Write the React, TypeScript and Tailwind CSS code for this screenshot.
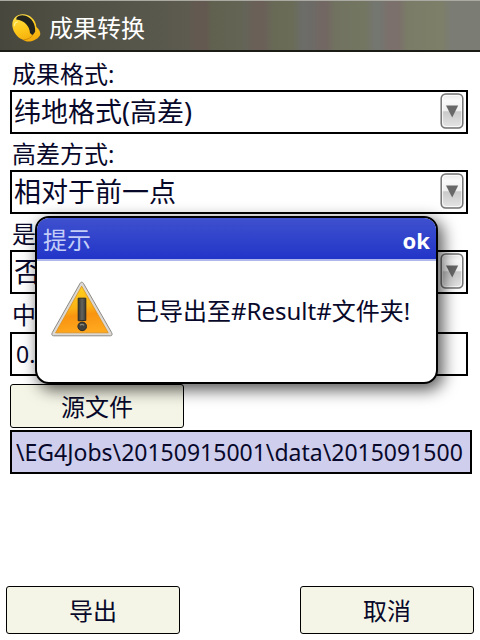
import React, { useState } from 'react';

type SelectFieldProps = {
  id: string;
  label: string;
  options: string[];
};

const SelectField: React.FC<SelectFieldProps> = ({ id, label, options }) => (
  <div className="flex flex-col">
    <label htmlFor={id} className="flex h-9 items-center px-0.5 pt-1 text-[24px] leading-8">
      {label}
    </label>
    <div className="relative">
      <select
        id={id}
        className="block h-11 w-full appearance-none rounded-none border-2 border-black bg-white pl-0.5 pr-8 text-[27px] leading-9 outline-none"
      >
        {options.map((option) => (
          <option key={option}>{option}</option>
        ))}
      </select>
      <DropArrow />
    </div>
  </div>
);

const DropArrow = () => (
  <svg className="pointer-events-none absolute right-1 top-[3px]" width="24" height="36" viewBox="0 0 24 36" aria-hidden="true">
    <defs>
      <linearGradient id="knob" x1="0" y1="0" x2="0" y2="1">
        <stop offset="0" stopColor="#e6e6e6" />
        <stop offset="0.2" stopColor="#fafafa" />
        <stop offset="0.5" stopColor="#eeeeee" />
        <stop offset="0.52" stopColor="#c9c9c9" />
        <stop offset="1" stopColor="#e6e6e6" />
      </linearGradient>
    </defs>
    <rect x="1.2" y="1" width="21.6" height="34" rx="4.5" fill="url(#knob)" stroke="#747474" strokeWidth="1.5" />
    <rect x="2.6" y="2.5" width="18.8" height="31" rx="3.5" fill="none" stroke="#fff" strokeOpacity="0.8" />
    <path d="M6 12.5H18.2L12.2 24.5Z" fill="#686868" />
  </svg>
);

const HelmetIcon = () => (
  <svg width="30" height="30" viewBox="0 0 30 30" aria-hidden="true">
    <defs>
      <linearGradient id="shell" x1="0.2" y1="0" x2="0.5" y2="1">
        <stop offset="0" stopColor="#ffe04a" />
        <stop offset="0.55" stopColor="#fdc81a" />
        <stop offset="1" stopColor="#f3ac0c" />
      </linearGradient>
    </defs>
    <path d="M1.4 10C2.2 5 6 1.4 11.5 1.2C18.5 1 25 6.5 25.4 14C27.5 16 29.6 18.5 29.3 21C29 25 22 28.6 17.5 28.6C15 28.6 13.8 27.8 12 26.8C6 25 .4 17 1.4 10Z" fill="url(#shell)" />
    <path d="M12.6 26.8C17 26.6 20.6 24.6 22.4 21" fill="none" stroke="#d08a06" strokeWidth="1" />
    <path d="M5.6 4.6C7.6 2.4 11 1.6 14.6 2.8C20.6 5 24.6 10.6 24.2 18.4C23.6 19.8 22.6 21 21.2 22L19 20C18.6 13.4 13.4 7.2 5.2 6.6Z" fill="#24241e" />
    <path d="M3.4 13C3.4 10.4 4.6 9 6.8 8.8" fill="none" stroke="#fff08a" strokeWidth="1.2" />
  </svg>
);

const WarningIcon = () => (
  <svg width="62" height="56" viewBox="0 0 62 56" className="shrink-0" aria-hidden="true">
    <defs>
      <linearGradient id="warn" x1="0.4" y1="0" x2="0.55" y2="1">
        <stop offset="0" stopColor="#ffd21d" />
        <stop offset="0.45" stopColor="#fbb216" />
        <stop offset="0.62" stopColor="#f99410" />
        <stop offset="1" stopColor="#ffa91f" />
      </linearGradient>
      <linearGradient id="bar" x1="0" y1="0" x2="1" y2="0">
        <stop offset="0" stopColor="#33342f" />
        <stop offset="0.5" stopColor="#64655f" />
        <stop offset="1" stopColor="#3a3a34" />
      </linearGradient>
    </defs>
    <path d="M30.7 1.2C31.6 1.2 32.2 1.8 32.8 3L60.6 51.5C61.5 53.4 61.2 54.8 59.5 54.8H2.5C.8 54.8.4 53.4 1.3 51.5L28.7 3C29.3 1.8 29.9 1.2 30.7 1.2Z" fill="#dcd9d4" stroke="#8d8984" strokeWidth="1" />
    <path d="M30.7 5.2L57.2 51.8H4.6Z" fill="url(#warn)" stroke="#dd901b" strokeWidth="0.8" />
    <path d="M27.2 17.2H34.8V39.4L27.2 39.8Z" fill="url(#bar)" stroke="#292a27" />
    <circle cx="31.2" cy="45.4" r="4.3" fill="#41423d" stroke="#292a27" />
    <path d="M29 44.2Q31 42.4 33.2 44.4" fill="none" stroke="#8b8b80" strokeWidth="1.2" />
  </svg>
);

type MessageDialogProps = {
  title: string;
  message: string;
  onClose: () => void;
};

const MessageDialog: React.FC<MessageDialogProps> = ({ title, message, onClose }) => (
  <div
    role="dialog"
    aria-label={title}
    className="absolute left-[35px] right-[42px] top-[216px] overflow-hidden rounded-[14px] border-2 border-black bg-white shadow-[4px_5px_16px_1px_rgba(0,0,0,0.65)]"
  >
    <div className="flex h-[43px] items-center justify-between border-b-2 border-[#b0b7ea] bg-linear-to-b from-[#3f50ce] to-[#2234c8] px-1.5 pt-0.5">
      <h2 className="text-[24px] leading-8 text-[#c3cdf8]">{title}</h2>
      <button type="button" onClick={onClose} className="text-[22px] font-bold leading-8 text-white">
        ok
      </button>
    </div>
    <div className="flex h-[121px] items-start pl-3.5 pt-5">
      <WarningIcon />
      <p className="whitespace-nowrap pl-[22px] pt-3.5 text-[24px] leading-8">{message}</p>
    </div>
  </div>
);

const App: React.FC = () => {
  const [showMessage, setShowMessage] = useState(true);
  const [offset, setOffset] = useState('0.');

  return (
    <div className="relative flex min-h-screen flex-col bg-white font-['Noto_Sans','Noto_Sans_CJK_SC',sans-serif] text-[#08082a]">
      <header className="flex h-[52px] items-center gap-2 border-b-2 border-t border-b-[#1c1c16] border-t-[#aaaaa2] bg-[linear-gradient(90deg,#48473d_0%,#4e4e42_12%,#56564a_28%,#5d5b50_39%,#645950_41%,#645950_43%,#60614f_44%,#636453_50%,#646459_51%,#6a6058_53%,#6a6058_55%,#686a56_57%,#6a6c58_61%,#6c6c68_63%,#6d6b67_65%,#726762_67%,#726762_68%,#717360_70%,#737661_76%,#747670_78%,#747670_79%,#7b706b_81%,#7b706b_83%,#7a7c67_85%,#7d7f69_92%,#7b7c74_94%,#7b7c74_100%)] pl-[11px] pt-1">
        <HelmetIcon />
        <h1 className="text-[24px] leading-8 text-white">成果转换</h1>
      </header>

      <main className="flex flex-col pl-2.5 pr-3 pt-0.5">
        <SelectField id="format" label="成果格式:" options={['纬地格式(高差)']} />
        <SelectField id="mode" label="高差方式:" options={['相对于前一点']} />
        <SelectField id="include" label="是" options={['否']} />

        <label htmlFor="offset" className="flex h-[38px] items-center px-0.5 pt-1 text-[24px] leading-8">
          中
        </label>
        <input
          id="offset"
          value={offset}
          onChange={(e) => setOffset(e.target.value)}
          className="h-11 w-full border-2 border-black bg-white px-1 text-[23px] outline-none"
        />
      </main>

      <section className="flex flex-col gap-0.5 pl-2.5 pr-2 pt-2">
        <button type="button" className="h-11 w-[174px] rounded-[3px] border border-black bg-[#f5f5e7] pt-0.5 text-[24px] leading-8">
          源文件
        </button>
        <input
          aria-label="源文件"
          readOnly
          value="\EG4Jobs\20150915001\data\2015091500"
          className="h-11 w-full border-2 border-black bg-[#cfcfed] px-1 text-[23px] outline-none"
        />
      </section>

      <footer className="mt-auto flex justify-between p-1.5">
        <button type="button" className="h-12 w-[174px] rounded-[3px] border border-black bg-[#f5f5e7] pt-0.5 text-[24px] leading-8">
          导出
        </button>
        <button type="button" className="h-12 w-[174px] rounded-[3px] border border-black bg-[#f5f5e7] pt-0.5 text-[24px] leading-8">
          取消
        </button>
      </footer>

      {showMessage && (
        <MessageDialog title="提示" message="已导出至#Result#文件夹!" onClose={() => setShowMessage(false)} />
      )}
    </div>
  );
};

export default App;
